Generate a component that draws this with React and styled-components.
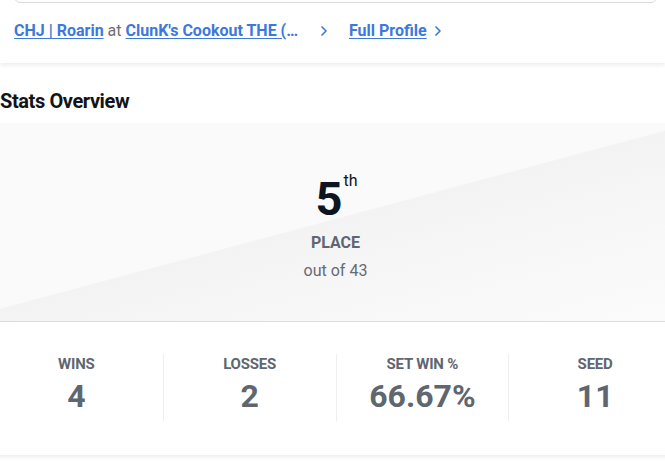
import styled, { createGlobalStyle } from "styled-components";
import { ChevronRight } from "lucide-react";

const GlobalStyle = createGlobalStyle`
  body {
    margin: 0;
    background: #fff;
    font-family: Roboto, "Liberation Sans", sans-serif;
    overflow: hidden;
  }
`

const Page = styled.div`
  width: 665px;
  height: 464px;
  overflow: hidden;
`
const TopCard = styled.div`
  display: flow-root;
  height: 63px;
  padding: 0 8px 0 14px;
  box-sizing: border-box;
  background: #fff;
  box-shadow: 0 2px 4px rgba(0, 0, 0, 0.08);
  position: relative;
  z-index: 1;
`
const SearchBox = styled.div`
  height: 42px;
  margin-top: -39px;
  border: 1px solid #d9d9e3;
  border-radius: 6px;
  box-sizing: border-box;
`
const LinkRow = styled.div`
  display: flex;
  align-items: center;
  margin-top: 18px;
  font-size: 16px;
  font-weight: 700;
  color: #3d78dc;
`
const Crumb = styled.div`
  max-width: 290px;
  white-space: nowrap;
  overflow: hidden;
  text-overflow: ellipsis;
`
const Link = styled.a`
  color: #3d78dc;
  text-decoration: underline;
  text-underline-offset: 2px;
`
const Muted = styled.span`
  color: #6f6f6f;
  font-weight: 400;
`
const Chevron = styled(ChevronRight)`
  flex: none;
  margin-left: ${p => p.$gap || 4}px;
  margin-right: ${p => p.$after || 0}px;
`
const StatsCard = styled.div`
  margin: 4px -16px 0 -10px;
  background: #fff;
  box-shadow: 0 2px 4px rgba(0, 0, 0, 0.08);
`
const Title = styled.h2`
  margin: 0;
  padding: 22px 10px 10px;
  font-size: 20px;
  line-height: 24px;
  font-weight: 700;
  color: #111418;
  letter-spacing: -0.4px;
`
const Hero = styled.div`
  height: 199px;
  border-bottom: 1px solid #dcdcdc;
  background: linear-gradient(165deg, #fafafa 0%, #fafafa 49%, #f3f3f3 49.4%, #f8f8f8 75%, #fbfbfb 100%);
  display: flex;
  flex-direction: column;
  align-items: center;
  padding-top: 50px;
  box-sizing: border-box;
`
const Place = styled.div`
  display: flex;
  align-items: flex-start;
  color: #0c1520;
  margin-left: 2px;
`
const Big = styled.span`
  font-size: 47px;
  font-weight: 700;
  line-height: 52px;
`
const Sup = styled.span`
  font-size: 16px;
  line-height: 16px;
  margin-left: 1px;
`
const PlaceLabel = styled.div`
  margin-top: 8px;
  font-size: 16px;
  font-weight: 700;
  color: #5f6670;
`
const OutOf = styled.div`
  margin-top: 9px;
  font-size: 16px;
  color: #666b73;
`
const StatRow = styled.div`
  display: grid;
  grid-template-columns: repeat(4, 1fr);
  padding: 32px 0 34px;
`
const Stat = styled.div`
  display: flex;
  flex-direction: column;
  align-items: center;
  border-left: ${p => (p.$first ? "none" : "1px solid #eeeeee")};
  height: 67px;
`
const Label = styled.div`
  margin-top: 1px;
  font-size: 15px;
  font-weight: 700;
  color: #5f6670;
  letter-spacing: -0.2px;
`
const Value = styled.div`
  margin-top: 3px;
  font-size: 32px;
  font-weight: 700;
  color: #5f6670;
  line-height: 40px;
`

const stats = [
  { label: "WINS", value: "4" },
  { label: "LOSSES", value: "2" },
  { label: "SET WIN %", value: "66.67%" },
  { label: "SEED", value: "11" },
]

const App = () => {
  return (
    <Page>
      <GlobalStyle />
      <TopCard>
        <SearchBox />
        <LinkRow>
          <Crumb>
            <Link>CHJ | Roarin</Link> <Muted>at</Muted> <Link>ClunK's Cookout THE (Lounge Edition)</Link>
          </Crumb>
          <Chevron size={16} strokeWidth={2.5} $gap={12} $after={17} />
          <Link>Full Profile</Link>
          <Chevron size={16} strokeWidth={2.5} $gap={3} />
        </LinkRow>
      </TopCard>
      <StatsCard>
        <Title>Stats Overview</Title>
        <Hero>
          <Place>
            <Big>5</Big>
            <Sup>th</Sup>
          </Place>
          <PlaceLabel>PLACE</PlaceLabel>
          <OutOf>out of 43</OutOf>
        </Hero>
        <StatRow>
          {stats.map((s, i) => (
            <Stat key={s.label} $first={i === 0}>
              <Label>{s.label}</Label>
              <Value>{s.value}</Value>
            </Stat>
          ))}
        </StatRow>
      </StatsCard>
    </Page>
  )
}

export default App;
